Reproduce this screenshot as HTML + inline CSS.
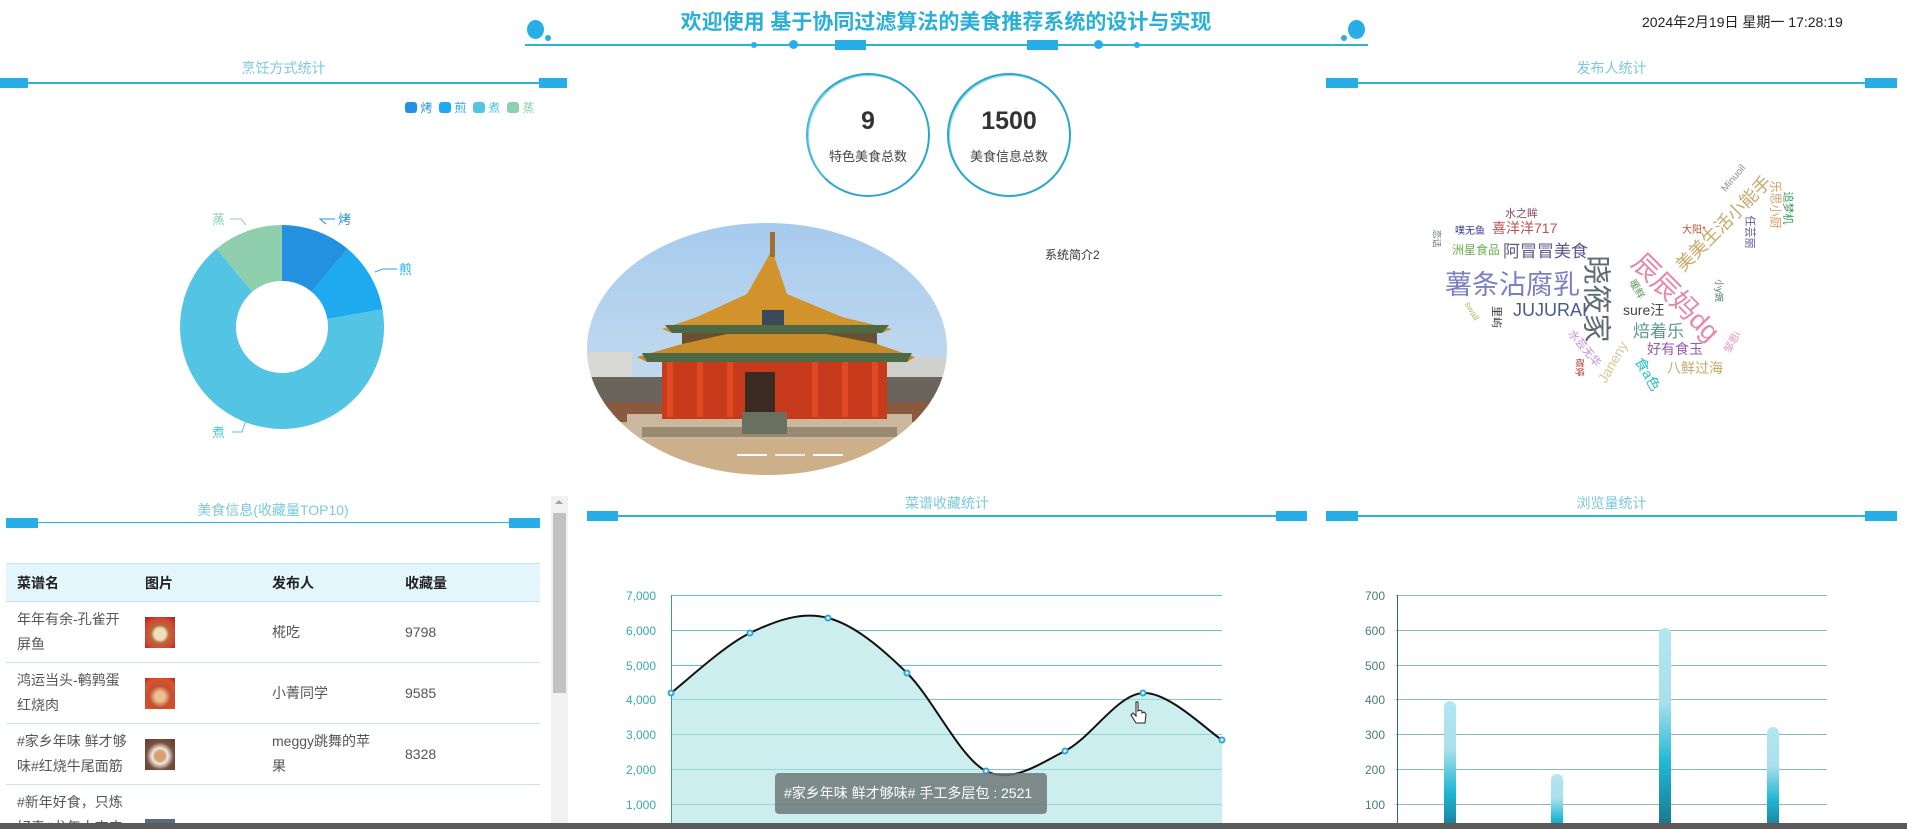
<!DOCTYPE html>
<html><head><meta charset="utf-8"><style>
*{margin:0;padding:0;box-sizing:border-box}
html{width:1907px;height:829px;overflow:hidden}
body{width:1907px;height:829px;overflow:hidden;background:#fff;position:relative;font-family:"Liberation Sans","Noto Sans CJK SC",sans-serif;color:#333}
.a{position:absolute;white-space:nowrap}
.ttl{position:absolute;color:#7cc8de;font-size:14px;text-align:center}
.ln{position:absolute;height:2px;background:#2db4d2}
.bx{position:absolute;height:10px;background:#27aee6}
table{border-collapse:collapse}
</style></head><body>

<!-- header -->
<div class="a" style="left:0;width:1892px;top:6px;text-align:center;font-size:21px;font-weight:bold;color:#2aafd6;">欢迎使用 基于协同过滤算法的美食推荐系统的设计与实现</div>
<div class="ln" style="left:525px;width:843px;top:44px;height:2px;"></div>
<div class="bx" style="left:835px;width:31px;top:40px"></div>
<div class="bx" style="left:1027px;width:31px;top:40px"></div>
<div class="a" style="left:751px;top:42px;width:6px;height:6px;border-radius:50%;background:#27aee6"></div>
<div class="a" style="left:789px;top:40px;width:9px;height:9px;border-radius:50%;background:#27aee6"></div>
<div class="a" style="left:1094px;top:40px;width:9px;height:9px;border-radius:50%;background:#27aee6"></div>
<div class="a" style="left:1134px;top:42px;width:6px;height:6px;border-radius:50%;background:#27aee6"></div>
<div class="a" style="left:527px;top:20px;width:17px;height:19px;border-radius:50%;background:#27aee6"></div>
<div class="a" style="left:545px;top:35px;width:6px;height:6px;border-radius:50%;background:#27aee6"></div>
<div class="a" style="left:1348px;top:20px;width:17px;height:19px;border-radius:50%;background:#27aee6"></div>
<div class="a" style="left:1341px;top:35px;width:6px;height:6px;border-radius:50%;background:#27aee6"></div>
<div class="a" style="left:1642px;top:12px;font-size:14px;color:#222">2024年2月19日 星期一 17:28:19</div>

<!-- left top panel -->
<div class="ttl" style="left:0;width:567px;top:58px">烹饪方式统计</div>
<div class="ln" style="left:0;width:567px;top:82px"></div>
<div class="bx" style="left:0;width:28px;top:78px"></div>
<div class="bx" style="left:539px;width:28px;top:78px"></div>
<div class="a" style="left:405px;top:101px;font-size:12px;line-height:14px">
<span style="display:inline-block;width:12px;height:11px;border-radius:3px;background:#2490e0;vertical-align:-1px"></span> <span style="color:#2490e0">烤</span>
&nbsp;<span style="display:inline-block;width:12px;height:11px;border-radius:3px;background:#1eaaee;vertical-align:-1px"></span> <span style="color:#1eaaee">煎</span>
&nbsp;<span style="display:inline-block;width:12px;height:11px;border-radius:3px;background:#54c4e4;vertical-align:-1px"></span> <span style="color:#54c4e4">煮</span>
&nbsp;<span style="display:inline-block;width:12px;height:11px;border-radius:3px;background:#8fcfae;vertical-align:-1px"></span> <span style="color:#8fcfae">蒸</span></div>
<svg class="a" style="left:0;top:0" width="580" height="480">
<path d="M282 225 A102 102 0 0 1 347.6 248.9 L311.6 291.8 A46 46 0 0 0 282 281Z" fill="#2490e0"/>
<path d="M347.6 248.9 A102 102 0 0 1 382.5 309.3 L327.3 319 A46 46 0 0 0 311.6 291.8Z" fill="#1eaaee"/>
<path d="M382.5 309.3 A102 102 0 1 1 216.4 248.9 L252.4 291.8 A46 46 0 1 0 327.3 319Z" fill="#54c4e4"/>
<path d="M216.4 248.9 A102 102 0 0 1 282 225 L282 281 A46 46 0 0 0 252.4 291.8Z" fill="#8fcfae"/>
<polyline points="326,224 320,219 335,219" fill="none" stroke="#2490e0"/>
<polyline points="375,272 383,269 397,269" fill="none" stroke="#1eaaee"/>
<polyline points="246,420 242,432 232,432" fill="none" stroke="#54c4e4"/>
<polyline points="246,225 241,219 230,219" fill="none" stroke="#8fcfae"/>
<text x="338" y="224" font-size="13" fill="#2490e0">烤</text>
<text x="399" y="274" font-size="13" fill="#1eaaee">煎</text>
<text x="212" y="437" font-size="13" fill="#54c4e4">煮</text>
<text x="212" y="224" font-size="13" fill="#8fcfae">蒸</text>
</svg>

<!-- stats circles -->
<div class="a" style="left:806px;top:73px;width:124px;height:124px;border-radius:50%;border:2px solid #2aa8cc;border-left-color:#4bb8d6;box-shadow:inset 1px 1px 0 #8fd6ea"></div>
<div class="a" style="left:806px;top:107px;width:124px;text-align:center;font-size:25px;font-weight:bold;color:#333">9</div>
<div class="a" style="left:806px;top:146px;width:124px;text-align:center;font-size:13px;color:#444">特色美食总数</div>
<div class="a" style="left:947px;top:73px;width:124px;height:124px;border-radius:50%;border:2px solid #2aa8cc;box-shadow:inset 1px 1px 0 #8fd6ea"></div>
<div class="a" style="left:947px;top:107px;width:124px;text-align:center;font-size:25px;font-weight:bold;color:#333">1500</div>
<div class="a" style="left:947px;top:146px;width:124px;text-align:center;font-size:13px;color:#444">美食信息总数</div>

<!-- palace image -->
<svg class="a" style="left:587px;top:222px" width="360" height="254">
<defs><clipPath id="ce"><ellipse cx="180" cy="127" rx="180" ry="126"/></clipPath>
<linearGradient id="sky" x1="0" y1="0" x2="0" y2="1"><stop offset="0" stop-color="#a6cbee"/><stop offset="1" stop-color="#d3e2ee"/></linearGradient></defs>
<g clip-path="url(#ce)">
<rect width="360" height="254" fill="url(#sky)"/>
<rect x="0" y="130" width="45" height="30" fill="#d8d8d4"/>
<rect x="300" y="135" width="60" height="25" fill="#d0d0cc"/>
<rect x="0" y="155" width="360" height="32" fill="#6a645c"/>
<rect x="0" y="180" width="360" height="20" fill="#8a5a40"/>
<rect x="0" y="200" width="360" height="54" fill="#cdb08a"/>
<rect x="40" y="192" width="285" height="25" fill="#c9b89e"/>
<rect x="55" y="205" width="255" height="10" fill="#9a8a72"/>
<rect x="75" y="135" width="225" height="62" fill="#c83a1c"/>
<g fill="#e04a22"><rect x="80" y="140" width="6" height="55"/><rect x="110" y="140" width="6" height="55"/><rect x="140" y="140" width="6" height="55"/><rect x="225" y="140" width="6" height="55"/><rect x="255" y="140" width="6" height="55"/><rect x="285" y="140" width="6" height="55"/></g>
<rect x="158" y="150" width="30" height="45" fill="#3a2a22"/>
<rect x="155" y="190" width="45" height="22" fill="#6a7060"/>
<rect x="95" y="105" width="195" height="20" fill="#6a5030"/>
<path d="M50 135 L95 122 L140 112 L240 112 L290 122 L328 135 L320 140 L60 140Z" fill="#c98a2a"/>
<path d="M55 131 L325 131 L320 140 L60 140Z" fill="#4e6a44"/>
<path d="M75 107 L110 95 L160 72 L185 28 L200 72 L255 95 L305 107 L295 111 L85 111Z" fill="#d2922c"/>
<path d="M78 103 L302 103 L295 111 L85 111Z" fill="#4e6a44"/>
<rect x="183" y="10" width="5" height="25" fill="#a07030"/>
<rect x="175" y="88" width="22" height="15" fill="#3a4a5a"/>
<rect x="150" y="232" width="30" height="2" fill="#fff"/><rect x="188" y="232" width="30" height="2" fill="#eee"/><rect x="226" y="232" width="30" height="2" fill="#fff"/>
</g></svg>
<div class="a" style="left:1045px;top:246px;font-size:12px;color:#333">系统简介2</div>

<!-- right top panel -->
<div class="ttl" style="left:1326px;width:571px;top:58px">发布人统计</div>
<div class="ln" style="left:1326px;width:571px;top:82px"></div>
<div class="bx" style="left:1326px;width:32px;top:78px"></div>
<div class="bx" style="left:1865px;width:32px;top:78px"></div>
<div style="position:absolute;left:0;top:0;width:1907px;height:480px;pointer-events:none">
<div class="a" style="left:1445px;top:263px;font-size:27px;color:#7b7fc4">薯条沾腐乳</div>
<div class="a" style="left:1555px;top:278px;font-size:29px;color:#5e6a74;transform:rotate(90deg);transform-origin:center">晓筱家</div>
<div class="a" style="left:1622px;top:276px;font-size:27px;color:#e58aa6;transform:rotate(45deg)">辰辰妈dg</div>
<div class="a" style="left:1660px;top:210px;font-size:18px;color:#c9a86a;transform:rotate(-45deg)">美美生活小能手</div>
<div class="a" style="left:1503px;top:237px;font-size:17px;color:#5a5a8a">阿冒冒美食</div>
<div class="a" style="left:1452px;top:241px;font-size:12px;color:#6ab04c">洲星食品</div>
<div class="a" style="left:1492px;top:218px;font-size:14px;color:#c0504d">喜洋洋717</div>
<div class="a" style="left:1505px;top:205px;font-size:11px;color:#8b4a6b">水之眸</div>
<div class="a" style="left:1455px;top:222px;font-size:10px;color:#3a3a9a">噗无鱼</div>
<div class="a" style="left:1513px;top:300px;font-size:18px;color:#4a5a8a">JUJURAI</div>
<div class="a" style="left:1623px;top:300px;font-size:14px;color:#444">sure汪</div>
<div class="a" style="left:1633px;top:317px;font-size:17px;color:#5a9a8a">焙着乐</div>
<div class="a" style="left:1647px;top:339px;font-size:14px;color:#9a5ab0">好有食玉</div>
<div class="a" style="left:1667px;top:358px;font-size:14px;color:#c9a86a">八鲜过海</div>
<div class="a" style="left:1590px;top:354px;font-size:14px;color:#d9c89a;transform:rotate(-60deg)">Janeny</div>
<div class="a" style="left:1630px;top:364px;font-size:14px;color:#2ac0c0;transform:rotate(60deg)">食a色</div>
<div class="a" style="left:1563px;top:340px;font-size:11px;color:#c78ad8;transform:rotate(50deg)">水芸无华</div>
<div class="a" style="left:1718px;top:173px;font-size:10px;color:#9a8a9a;transform:rotate(-50deg)">Minuoil</div>
<div class="a" style="left:1752px;top:196px;font-size:12px;color:#d9a06a;transform:rotate(90deg)">乐思小厨</div>
<div class="a" style="left:1772px;top:200px;font-size:11px;color:#3a9a5a;transform:rotate(90deg)">追梦机</div>
<div class="a" style="left:1734px;top:224px;font-size:11px;color:#5a5a9a;transform:rotate(90deg)">任芸丽</div>
<div class="a" style="left:1682px;top:221px;font-size:10px;color:#c05030">大阳*</div>
<div class="a" style="left:1628px;top:281px;font-size:10px;color:#5a9a5a;transform:rotate(60deg)">暖鲜</div>
<div class="a" style="left:1486px;top:309px;font-size:11px;color:#333;transform:rotate(90deg)">里屿</div>
<div class="a" style="left:1428px;top:232px;font-size:9px;color:#5a7a7a;transform:rotate(90deg)">恋话</div>
<div class="a" style="left:1462px;top:306px;font-size:9px;color:#b0c070;transform:rotate(60deg)">swall</div>
<div class="a" style="left:1571px;top:361px;font-size:9px;color:#c03030;transform:rotate(90deg)">碳婷</div>
<div class="a" style="left:1720px;top:334px;font-size:10px;color:#e090c0;transform:rotate(-60deg)">邹恩i</div>
<div class="a" style="left:1708px;top:284px;font-size:9px;color:#4a7a5a;transform:rotate(90deg)">小y豌</div>
</div>

<!-- bottom left table -->
<div class="ttl" style="left:6px;width:534px;top:500px">美食信息(收藏量TOP10)</div>
<div class="ln" style="left:6px;width:534px;top:522px;height:1px"></div>
<div class="bx" style="left:6px;width:32px;top:518px"></div>
<div class="bx" style="left:509px;width:31px;top:518px"></div>
<div class="a" style="left:551px;top:496px;width:17px;height:333px;background:#f1f1f1"></div>
<div class="a" style="left:553px;top:513px;width:13px;height:180px;background:#c1c1c1"></div>
<div class="a" style="left:555px;top:500px;width:0;height:0;border-left:4px solid transparent;border-right:4px solid transparent;border-bottom:4px solid #a3a3a3"></div>
<div class="a" style="left:6px;top:563px;width:534px;height:266px;overflow:hidden">
<table style="width:534px;font-size:14px;color:#555">
<tr style="background:#e3f6fc;height:38px;border-top:1px solid #bfe3ef;border-bottom:1px solid #bfe3ef;font-weight:bold;color:#222"><td style="width:134px;padding-left:11px">菜谱名</td><td style="width:132px;padding-left:5px">图片</td><td style="width:133px;padding-left:0">发布人</td><td>收藏量</td></tr>
<tr style="height:61px;border-bottom:1px solid #c9e6ef"><td style="padding-left:11px;line-height:25px">年年有余-孔雀开<br>屏鱼</td><td style="padding-left:5px"><div style="width:30px;height:31px;background:radial-gradient(circle at 50% 55%,#f1e0c0 0 25%,#b46a3a 40%,#d84030 70%,#8a2a20)"></div></td><td>椛吃</td><td>9798</td></tr>
<tr style="height:61px;border-bottom:1px solid #c9e6ef"><td style="padding-left:11px;line-height:25px">鸿运当头-鹌鹑蛋<br>红烧肉</td><td style="padding-left:5px"><div style="width:30px;height:31px;background:radial-gradient(circle at 50% 60%,#f0c090 0 20%,#c05030 45%,#e05028 75%,#a03020)"></div></td><td>小菁同学</td><td>9585</td></tr>
<tr style="height:61px;border-bottom:1px solid #c9e6ef"><td style="padding-left:11px;line-height:25px">#家乡年味 鲜才够<br>味#红烧牛尾面筋</td><td style="padding-left:5px"><div style="width:30px;height:31px;background:radial-gradient(circle at 50% 55%,#d8a070 0 22%,#f0e8e0 35%,#7a5040 60%,#5a4030)"></div></td><td style="line-height:25px">meggy跳舞的苹<br>果</td><td>8328</td></tr>
<tr style="height:61px"><td style="padding-left:11px;line-height:25px;vertical-align:top;padding-top:5px">#新年好食，只炼<br>好毒#龙年大吉肉</td><td style="padding-left:5px;vertical-align:top;padding-top:34px"><div style="width:30px;height:31px;background:#5a6a80"></div></td><td></td><td></td></tr>
</table></div>

<!-- middle bottom chart -->
<div class="ttl" style="left:587px;width:720px;top:493px">菜谱收藏统计</div>
<div class="ln" style="left:587px;width:720px;top:515px"></div>
<div class="bx" style="left:587px;width:31px;top:511px"></div>
<div class="bx" style="left:1276px;width:31px;top:511px"></div>
<svg class="a" style="left:0;top:0" width="1907" height="829">
<g stroke="#5fc4c8" stroke-width="1">
<line x1="671" y1="595.5" x2="1222" y2="595.5"/><line x1="671" y1="630.5" x2="1222" y2="630.5"/><line x1="671" y1="665.5" x2="1222" y2="665.5"/><line x1="671" y1="699.5" x2="1222" y2="699.5"/><line x1="671" y1="734.5" x2="1222" y2="734.5"/><line x1="671" y1="769.5" x2="1222" y2="769.5"/><line x1="671" y1="804.5" x2="1222" y2="804.5"/>
</g>
<path d="M671 693 C684 683 724 645.5 750 633 C776 620.5 802 611 828 618 C854 624.7 881 647.5 907 673 C933 698.5 960 758 986 771 C1012 784 1039 764 1065 751 C1091 738 1117 694.5 1143 693 C1169 691.5 1209 732 1222 740 L1222 829 L671 829Z" fill="#cdeeee"/>
<g stroke="#7fd0d2" stroke-width="1" opacity=".7">
<line x1="671" y1="699.5" x2="1222" y2="699.5"/><line x1="671" y1="734.5" x2="1222" y2="734.5"/><line x1="671" y1="769.5" x2="1222" y2="769.5"/><line x1="671" y1="804.5" x2="1222" y2="804.5"/>
</g>
<path d="M671 693 C684 683 724 645.5 750 633 C776 620.5 802 611 828 618 C854 624.7 881 647.5 907 673 C933 698.5 960 758 986 771 C1012 784 1039 764 1065 751 C1091 738 1117 694.5 1143 693 C1169 691.5 1209 732 1222 740" fill="none" stroke="#111" stroke-width="2"/>
<line x1="671.5" y1="595" x2="671.5" y2="829" stroke="#3a9aa0"/>
<g fill="#fff" stroke="#2aa8d8" stroke-width="2">
<circle cx="671" cy="693" r="2.5"/><circle cx="750" cy="633" r="2.5"/><circle cx="828" cy="618" r="2.5"/><circle cx="907" cy="673" r="2.5"/><circle cx="986" cy="771" r="2.5"/><circle cx="1065" cy="751" r="2.5"/><circle cx="1143" cy="693" r="2.5"/><circle cx="1222" cy="740" r="2.5"/>
</g>
<g font-size="12" fill="#3aa8b0" text-anchor="end" font-family="Liberation Sans,sans-serif">
<text x="656" y="600">7,000</text><text x="656" y="635">6,000</text><text x="656" y="670">5,000</text><text x="656" y="704">4,000</text><text x="656" y="739">3,000</text><text x="656" y="774">2,000</text><text x="656" y="809">1,000</text>
</g>
<path d="M1136 702 l0 14 l-3 -3 l-2 2 l5 8 l9 0 l1 -9 l-2 -2 l-2 1 l0 -2 l-2 -1 l-2 1 l0 -9 z" fill="#fff" stroke="#222" stroke-width="1"/>

<!-- right chart -->
<g stroke="#8ab8c0" stroke-width="1">
<line x1="1396" y1="595.5" x2="1827" y2="595.5"/><line x1="1396" y1="630.5" x2="1827" y2="630.5"/><line x1="1396" y1="665.5" x2="1827" y2="665.5"/><line x1="1396" y1="699.5" x2="1827" y2="699.5"/><line x1="1396" y1="734.5" x2="1827" y2="734.5"/><line x1="1396" y1="769.5" x2="1827" y2="769.5"/><line x1="1396" y1="804.5" x2="1827" y2="804.5"/>
</g>
<line x1="1397.5" y1="595" x2="1397.5" y2="829" stroke="#2a6a70"/>
<defs><linearGradient id="bg" x1="0" y1="0" x2="0" y2="1"><stop offset="0" stop-color="#b3e6f0"/><stop offset=".35" stop-color="#a8e0ec"/><stop offset=".65" stop-color="#1eb6d4"/><stop offset="1" stop-color="#1a6a80"/></linearGradient></defs>
<rect x="1444" y="701" width="12" height="140" rx="6" fill="url(#bg)"/>
<rect x="1551" y="774" width="12" height="70" rx="6" fill="url(#bg)"/>
<rect x="1659" y="628" width="12" height="210" rx="6" fill="url(#bg)"/>
<rect x="1767" y="727" width="12" height="112" rx="6" fill="url(#bg)"/>
<g font-size="12" fill="#4a7a80" text-anchor="end" font-family="Liberation Sans,sans-serif">
<text x="1385" y="600">700</text><text x="1385" y="635">600</text><text x="1385" y="670">500</text><text x="1385" y="704">400</text><text x="1385" y="739">300</text><text x="1385" y="774">200</text><text x="1385" y="809">100</text>
</g>
</svg>
<div class="a" style="left:775px;top:773px;width:272px;height:41px;border-radius:4px;background:rgba(110,120,120,.85);color:#fff;font-size:14px;line-height:41px;padding-left:9px">#家乡年味 鲜才够味# 手工多层包 : 2521</div>

<div class="ttl" style="left:1326px;width:571px;top:493px">浏览量统计</div>
<div class="ln" style="left:1326px;width:571px;top:515px"></div>
<div class="bx" style="left:1326px;width:32px;top:511px"></div>
<div class="bx" style="left:1865px;width:32px;top:511px"></div>

<div class="a" style="left:0;top:823px;width:1907px;height:6px;background:#5a5a5a"></div>
</body></html>
